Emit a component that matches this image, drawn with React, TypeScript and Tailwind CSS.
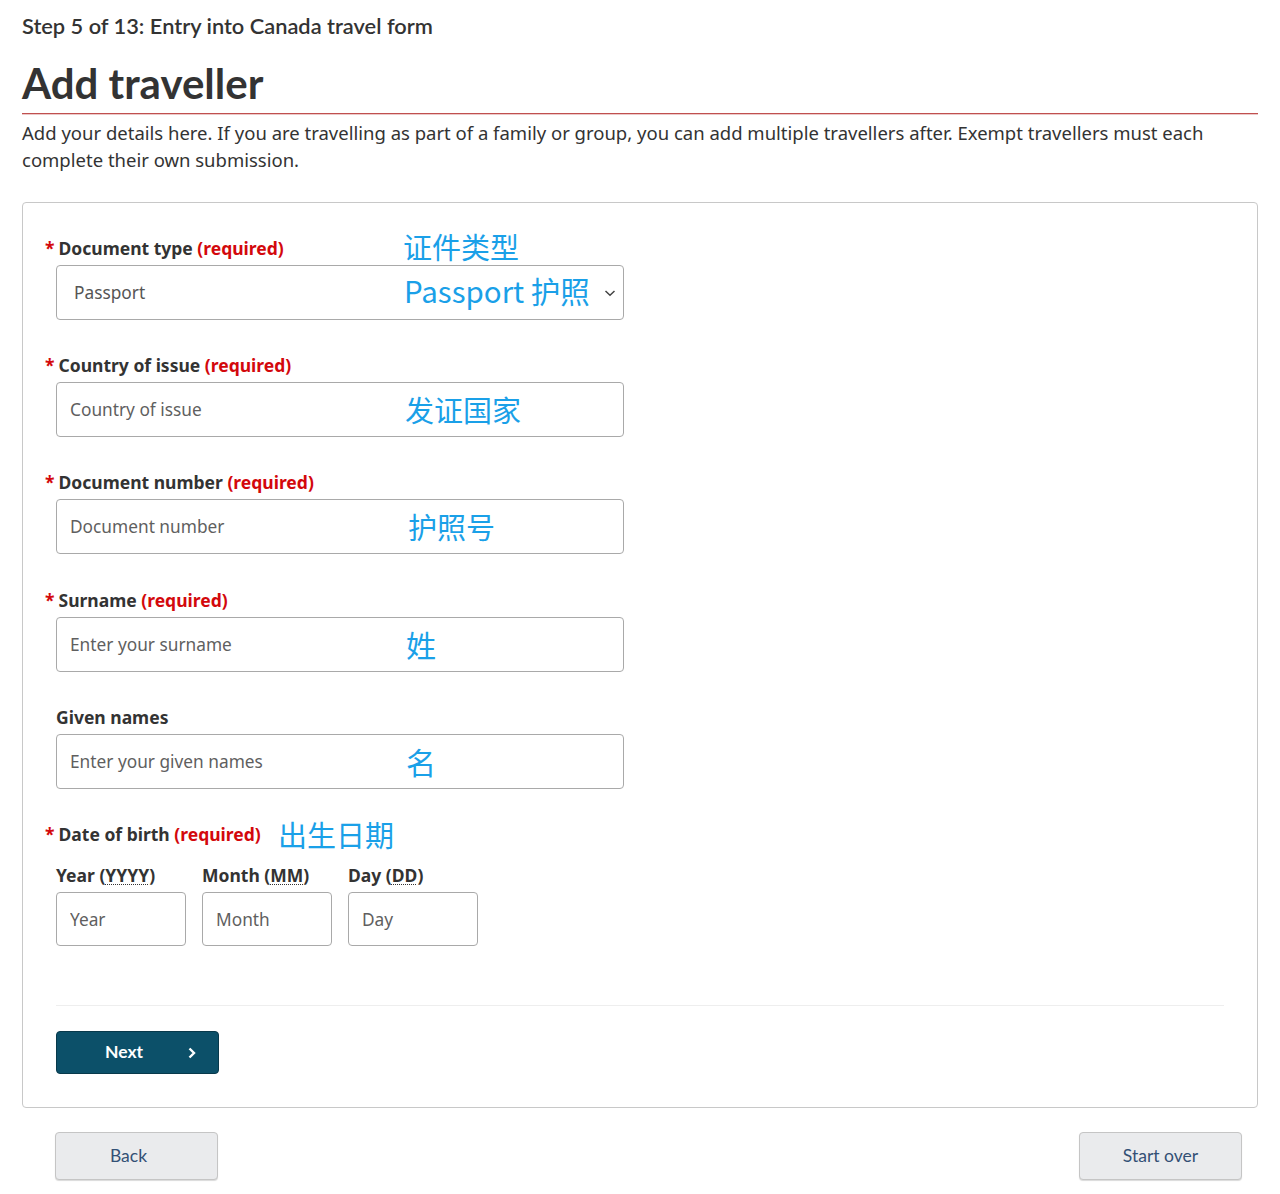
import React from 'react';

const body = "font-['Noto_Sans',sans-serif]";
const lato = "font-['Lato',sans-serif]";
const cjk = "font-['Noto_Sans_CJK_SC','Noto_Sans',sans-serif]";

// blue annotation overlays in the screenshot
function Note({ text, className }: { text: string; className: string }) {
    return (
        <span
            className={`pointer-events-none absolute leading-none text-[#1aa0e8] ${cjk} ${className}`}
        >
            {text}
        </span>
    );
}

function Label({ text, required }: { text: string; required?: boolean }) {
    return (
        <div
            className={`h-6 text-[17.5px] leading-6 font-bold text-[#333] ${body} ${
                required ? '-ml-[11px]' : ''
            }`}
        >
            {required && <span className="mr-[4px] text-[#d3080c]">*</span>}
            {text}
            {required && <span className="text-[#d3080c]"> (required)</span>}
        </div>
    );
}

function TextField({
    label,
    placeholder,
    note,
    required,
    noteClass,
    className = '',
}: {
    label: string;
    placeholder: string;
    note: string;
    required?: boolean;
    noteClass: string;
    className?: string;
}) {
    return (
        <div className={`flex flex-col ${className}`}>
            <Label text={label} required={required} />
            <div className="relative mt-[5px]">
                <input
                    className={`h-[55px] w-[568px] rounded border border-[#a9a9a9] bg-white px-[13px] text-[17.3px] text-[#333] placeholder:text-[#5f5f5f] ${body}`}
                    placeholder={placeholder}
                />
                <Note text={note} className={noteClass} />
            </div>
        </div>
    );
}

function DatePart({ label, abbr, placeholder }: { label: string; abbr: string; placeholder: string }) {
    return (
        <div className="flex flex-col">
            <div className={`h-6 text-[17.5px] leading-6 font-bold text-[#333] ${body}`}>
                {label} (
                <abbr className="underline decoration-dotted decoration-1 underline-offset-2">{abbr}</abbr>)
            </div>
            <input
                className={`mt-[5px] h-[54px] w-[130px] rounded border border-[#a9a9a9] px-[13px] text-[17.3px] placeholder:text-[#5f5f5f] ${body}`}
                placeholder={placeholder}
            />
        </div>
    );
}

export default function App() {
    return (
        <div className="min-h-[1194px] bg-white px-[22px] pt-[12px] pb-[14px] text-[#333]">
            <div className={`text-[21.8px] leading-7 font-semibold text-[#333] ${lato}`}>
                Step 5 of 13: Entry into Canada travel form
            </div>
            <h1 className={`mt-[19px] text-[42px] leading-[48px] font-bold text-[#333] ${lato}`}>
                Add traveller
            </h1>
            <div className="mt-[6px] h-[2px] border-b border-[#ecc8c8] bg-[#c0504f]" />
            <p className={`mt-[4px] text-[18.5px] leading-[27px] text-[#333] ${body}`}>
                Add your details here. If you are travelling as part of a family or group, you can add
                multiple travellers after. Exempt travellers must each complete their own submission.
            </p>

            <div className="mt-[29px] rounded border border-[#c8c8c8] px-[33px] pt-[33px] pb-[33px]">
                <div className="flex flex-col gap-[33px]">
                    <div className="flex flex-col">
                        <div className="relative">
                            <Label text="Document type" required />
                            <Note text="证件类型" className="left-[347px] -top-[4px] text-[29px]" />
                        </div>
                        <div className="relative mt-[5px] w-[568px]">
                            <div
                                className={`flex h-[55px] w-[568px] items-center justify-between rounded border border-[#a9a9a9] bg-white pr-[6px] pl-[17px] text-[17.3px] text-[#555] ${body}`}
                            >
                                <span>Passport</span>
                                <svg width="14" height="14" viewBox="0 0 14 14" className="text-[#444]">
                                    <path d="M2.5 5l4.5 4.2 4.5-4.2" fill="none" stroke="currentColor" strokeWidth="1.5" />
                                </svg>
                            </div>
                            <Note text="Passport 护照" className="left-[348px] top-[11px] text-[29.5px]" />
                        </div>
                    </div>

                    <TextField
                        label="Country of issue"
                        placeholder="Country of issue"
                        note="发证国家"
                        noteClass="left-[349px] top-[13px] text-[29px]"
                        required
                    />
                    <TextField
                        label="Document number"
                        placeholder="Document number"
                        note="护照号"
                        noteClass="left-[352px] top-[13px] text-[29px]"
                        required
                    />
                    <TextField
                        label="Surname"
                        placeholder="Enter your surname"
                        note="姓"
                        noteClass="left-[350px] top-[12px] text-[30px]"
                        className="mt-px"
                        required
                    />
                    <TextField
                        label="Given names"
                        placeholder="Enter your given names"
                        note="名"
                        noteClass="left-[350px] top-[12px] text-[30px]"
                    />

                    <div className="flex flex-col">
                        <div className="relative">
                            <Label text="Date of birth" required />
                            <Note text="出生日期" className="left-[222px] -top-[2px] text-[29px]" />
                        </div>
                        <div className="mt-[17px] flex gap-4">
                            <DatePart label="Year" abbr="YYYY" placeholder="Year" />
                            <DatePart label="Month" abbr="MM" placeholder="Month" />
                            <DatePart label="Day" abbr="DD" placeholder="Day" />
                        </div>
                    </div>
                </div>

                <div className="mt-[59px] h-px bg-[#eeeeee]" />

                <button
                    className={`mt-[25px] flex h-[43px] w-[163px] items-center rounded border border-[#08394b] bg-[#0c5069] pl-[48px] text-[17.5px] font-bold text-white ${lato}`}
                >
                    Next
                    <svg width="10" height="14" viewBox="0 0 10 14" className="ml-[44px]">
                        <path d="M2.5 2.5l4.5 4.5-4.5 4.5" fill="none" stroke="white" strokeWidth="2.4" />
                    </svg>
                </button>
            </div>

            <div className="mt-[24px] flex justify-between px-[33px] pr-[16px]">
                <button
                    className={`h-[48px] w-[163px] rounded border border-[#c5c5c5] bg-[#eaebed] pr-[16px] text-[17.5px] text-[#335075] shadow-[0_1px_1px_rgba(0,0,0,0.15)] ${lato}`}
                >
                    Back
                </button>
                <button
                    className={`h-[48px] w-[163px] rounded border border-[#c5c5c5] bg-[#eaebed] text-[17.5px] text-[#335075] shadow-[0_1px_1px_rgba(0,0,0,0.15)] ${lato}`}
                >
                    Start over
                </button>
            </div>
        </div>
    );
}
